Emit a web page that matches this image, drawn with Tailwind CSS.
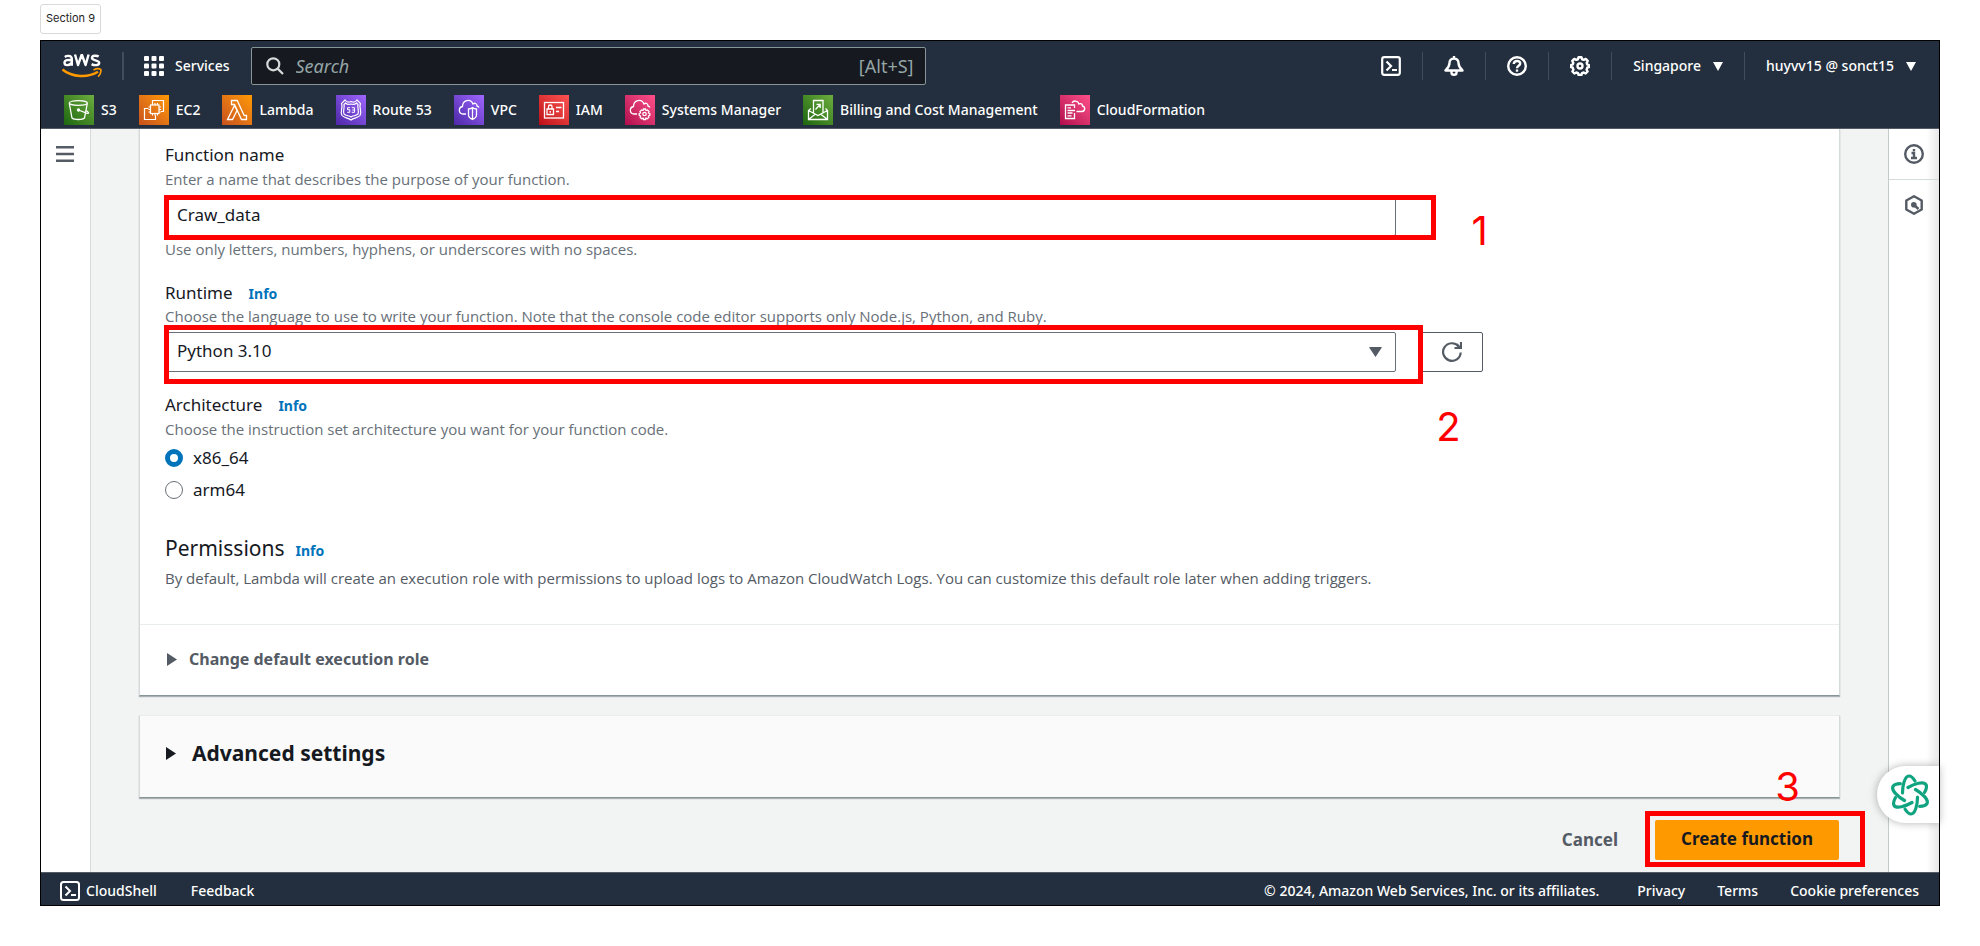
<!DOCTYPE html>
<html lang="en">
<head>
<meta charset="utf-8">
<title>Create function - Lambda</title>
<script src="https://cdn.jsdelivr.net/npm/@tailwindcss/browser@4"></script>
</head>
<body class="bg-white px-10 pt-1 font-['Noto_Sans','Open_Sans',sans-serif] text-[#16191f]">
<div class="mb-[6px] flex h-[30px] w-[61px] items-center justify-center rounded-[3px] border border-[#d9d9d9] pb-0.5 font-['Inter',sans-serif] text-[11px] whitespace-nowrap text-[#1e1e1e]">Section 9</div>

<div class="border border-black">
  <header class="border-b border-[#545b64] bg-[#232f3e] pt-[6px] text-sm font-medium text-white">
    <div class="flex h-[38px] items-center whitespace-nowrap pl-[21px] pr-[23px]">
      <a href="#" aria-label="AWS home" class="block">
        <svg class="h-6 w-10" viewBox="0 0 40 24" fill="none">
          <g stroke="#fff" stroke-width="2.400" stroke-linejoin="round">
            <path d="M2.800 3c1.200-.9 2.500-1.200 3.800-1.100 1.800.1 3.200 1 3.200 2.900v7M9.600 6.300C6.600 5.700 2.500 5.600 2.500 8.700c0 3.200 5 3.100 7.200.100"/>
            <path d="M13 .500l3 10.500 3.800-10.500 3.800 10.500L26.600.500"/>
            <path d="M36.700 2.600C34.800 1.300 30 1.200 30 4c0 3 7.200 1.600 7.200 4.800 0 3-5.300 2.700-7.600 1.300"/>
          </g>
          <path d="M.5 15.500C10 23.500 26 24 36 17.800" stroke="#f90" stroke-width="2.400"/>
          <path d="M31.500 16c2.500-1.300 5.900-1.300 7.200-.6.600 2.200-.8 5.400-2.600 7.300" stroke="#f90" stroke-width="1.700"/>
        </svg>
      </a>
      <span class="ml-5 h-7 w-0.5 bg-[#414d5c]"></span>
      <button class="ml-5 flex items-center gap-[11px]">
        <svg class="size-5" viewBox="0 0 20 20" fill="#fff"><g id="dots"><rect width="5" height="5" rx="1"/><rect x="7.500" width="5" height="5" rx="1"/><rect x="15" width="5" height="5" rx="1"/></g><use href="#dots" y="7.500"/><use href="#dots" y="15"/></svg>
        <span>Services</span>
      </button>
      <label class="ml-[21px] flex h-[38px] w-[675px] items-center rounded-[2px] border border-[#879596] bg-[#16191f] pl-[14px] pr-[11px] text-lg font-normal text-[#95a5a6]">
        <svg class="size-[18px] shrink-0" viewBox="0 0 18 18" fill="none" stroke="#d5dbdb" stroke-width="2.200"><circle cx="7.300" cy="7.300" r="6"/><path d="M11.600 11.600l5.400 5.400"/></svg>
        <input type="search" aria-label="Search" placeholder="Search" class="ml-3 min-w-0 flex-1 bg-transparent placeholder:text-[#95a5a6] placeholder:italic focus:outline-none">
        <span>[Alt+S]</span>
      </label>
      <nav class="ml-auto flex items-center gap-[21px]">
        <button aria-label="CloudShell"><svg class="block size-5" viewBox="0 0 20 20" fill="none" stroke="#fff" stroke-width="2.200"><rect x="1.200" y="1.200" width="17.600" height="17.600" rx="2"/><path d="M5.500 5.500L10 10l-4.500 4.500M11 14h5"/></svg></button>
        <span class="h-7 w-px bg-[#414d5c]"></span>
        <button aria-label="Notifications"><svg class="block size-5" viewBox="0 0 20 20" fill="none" stroke="#fff" stroke-width="2.400" stroke-linejoin="round"><path d="M10 0v2.500M10 2.500c-3 0-4.500 2.200-4.500 4.500 0 3.500-1.300 5-4 7.500h17c-2.700-2.500-4-4-4-7.500 0-2.300-1.500-4.500-4.500-4.500zM7.500 14.500v2.300a2.500 2 0 005 0v-2.300"/></svg></button>
        <span class="h-7 w-px bg-[#414d5c]"></span>
        <button aria-label="Help"><svg class="block size-5" viewBox="0 0 20 20" fill="none" stroke="#fff" stroke-width="2.400"><circle cx="10" cy="10" r="8.800"/><path d="M6.800 8c0-4 6.400-4 6.400-.5 0 2.300-3.200 2.200-3.200 4.700"/><path d="M10 13.500v2.200"/></svg></button>
        <span class="h-7 w-px bg-[#414d5c]"></span>
        <button aria-label="Settings"><svg class="block size-5" viewBox="0 0 20 20" fill="none" stroke="#fff" stroke-width="2.400" stroke-linejoin="round"><path d="M8.500 1.300h3l.6 2 1.600.6 2-1 2 2-1 2 .6 1.600 1.600.600v2l-1.600.6-.7 1.900 1 1.900-2 2-1.900-1-1.700.6-.5 1.700h-3l-.5-1.700-1.700-.6-1.900 1-2-2 1-1.900-.7-1.900-1.600-.6v-2l1.600-.6.600-1.600-1-2 2-2 2 1 1.600-.6z"/><circle cx="10" cy="10" r="2.500"/></svg></button>
        <span class="h-7 w-px bg-[#414d5c]"></span>
        <button class="flex items-center gap-3">Singapore<svg class="h-[9px] w-[10px]" viewBox="0 0 10 9" fill="#fff"><path d="M0 0h10L5 9z"/></svg></button>
        <span class="h-7 w-px bg-[#414d5c]"></span>
        <button class="flex items-center gap-3">huyvv15 @ sonct15<svg class="h-[9px] w-[10px]" viewBox="0 0 10 9" fill="#fff"><path d="M0 0h10L5 9z"/></svg></button>
      </nav>
    </div>
    <nav class="flex items-center gap-[22px] whitespace-nowrap pt-[10px] pb-[3px] pl-[23px]">
      <a href="#" class="flex items-center gap-[7px]"><span class="size-[30px] bg-linear-to-tr from-[#1b660f] to-[#6cae3e]"><svg viewBox="0 0 30 30" fill="none" stroke="#fff" stroke-width="1.300"><ellipse cx="14.300" cy="8" rx="9" ry="2.300"/><path d="M5.300 8.500L8 23c2 2 10.500 2 12.500 0l2.800-14.500M14.500 15l8 3.200c3 .8 2.300-1.200-.5-2.700"/><circle cx="14.500" cy="15" r="1" fill="#fff"/></svg></span>S3</a>
      <a href="#" class="flex items-center gap-[7px]"><span class="size-[30px] bg-linear-to-tr from-[#c8511b] to-[#f90]"><svg viewBox="0 0 30 30" fill="none" stroke="#fff" stroke-width="1.200"><rect x="11.500" y="10" width="8.500" height="8.500"/><path d="M13.500 8V10M16 8v2M18.500 8v2M13.500 18.500v2M16 18.500v2M18.500 18.500v2M9.500 12h2M9.500 14.500h2M9.500 17h2M20 12h2M20 14.500h2M20 17h2M13.500 8V5.500h11v11H22M9.500 13.500h-4v11h11v-4"/></svg></span>EC2</a>
      <a href="#" class="flex items-center gap-[7px]"><span class="size-[30px] bg-linear-to-tr from-[#c8511b] to-[#f90]"><svg viewBox="0 0 30 30" fill="none" stroke="#fff" stroke-width="1.300"><path d="M5.500 24.500h5l4.500-9-2.500-5zM9.500 5.500v4h3l7 15h5v-4h-2.300l-7-15z"/></svg></span>Lambda</a>
      <a href="#" class="flex items-center gap-[7px]"><span class="size-[30px] bg-linear-to-tr from-[#4d27a8] to-[#a166ff]"><svg viewBox="0 0 30 30" fill="none" stroke="#fff" stroke-width="1.200"><path d="M15 6.500c2 1 4.500.7 6-1.500l3.500 3.500c-2 4 2 7.500-.5 12-2 2.500-6 2-9 4.500-3-2.500-7-2-9-4.500-2.500-4.500 1.500-8-.5-12L9 5c1.500 2.200 4 2.500 6 1.500z"/><path d="M15 9c2 .7 4 .5 5.500-1l1.500 1.500c-1 3.500 1.500 7 0 9.500-2 2-5 1.500-7 3-2-1.500-5-1-7-3-1.500-2.500 1-6 0-9.500L9.500 8c1.500 1.500 3.500 1.700 5.500 1z"/><path stroke-width="1" d="M11.500 12.700v2h2.300v2.600h-2.600M14 12.700h-2.500M15.800 12.700h2.700v4.600h-2.700M16.300 15h2"/></svg></span>Route 53</a>
      <a href="#" class="flex items-center gap-[7px]"><span class="size-[30px] bg-linear-to-tr from-[#4d27a8] to-[#a166ff]"><svg viewBox="0 0 30 30" fill="none" stroke="#fff" stroke-width="1.300"><path d="M12 19H9c-4.500-.5-5-6.500-.5-7.500C8.500 5 16.500 3 19 9c2-1.500 4-.5 4 2 1.200.3 1.700.8 2 1.500"/><path d="M18.500 12.500c1.500 1.300 2.500 1.500 4 1.500v6c0 2-1.700 3.500-4 4.500-2.300-1-4-2.500-4-4.500v-6c1.500 0 2.500-.2 4-1.500zM18.500 12.500v12"/></svg></span>VPC</a>
      <a href="#" class="flex items-center gap-[7px]"><span class="size-[30px] bg-linear-to-tr from-[#bd0816] to-[#ff5252]"><svg viewBox="0 0 30 30" fill="none" stroke="#fff" stroke-width="1.300"><rect x="5.500" y="7.500" width="19" height="15.500"/><path d="M8 14h6.500v5.500H8zM9.500 14v-2.500c0-2 3.500-2 3.500 0V14M11.200 16v1.700M17 12.500h5.500M17 16.500h3"/></svg></span>IAM</a>
      <a href="#" class="flex items-center gap-[7px]"><span class="size-[30px] bg-linear-to-tr from-[#b0084d] to-[#ff4f8b]"><svg viewBox="0 0 30 30" fill="none" stroke="#fff" stroke-width="1.300"><path d="M12 19H9c-4.500-.5-5-6.500-.5-7.500C8.500 5 16.500 3 19 9c2-1.500 4-.5 4 2 1.200.3 1.700.8 2 1.500"/><circle cx="19.500" cy="19" r="1.700"/><path d="M18.500 14h2l.4 1.500 1.500-.5 1.600 1.500-.6 1.400 1.400.6v1.800l-1.400.7.400 1.400-1.400 1.300-1.500-.5-.4 1.300h-2l-.4-1.300-1.500.5-1.400-1.300.4-1.400-1.400-.7v-1.800l1.400-.6-.6-1.400 1.600-1.500 1.500.5z"/></svg></span>Systems Manager</a>
      <a href="#" class="flex items-center gap-[7px]"><span class="size-[30px] bg-linear-to-tr from-[#1b660f] to-[#6cae3e]"><svg viewBox="0 0 30 30" fill="none" stroke="#fff" stroke-width="1.300"><path d="M10.500 17.500v-12h9.500v12M8 13.500l-2.500 2V24.500h19v-9L22.500 13.500M5.500 15.500l9.500 5 9.500-5M5.500 24.500l7-5.500M24.500 24.500l-7-5.500M12.500 14.500l4.500-5M13.500 9.300h3.700v3.700"/></svg></span>Billing and Cost Management</a>
      <a href="#" class="flex items-center gap-[7px]"><span class="size-[30px] bg-linear-to-tr from-[#b0084d] to-[#ff4f8b]"><svg viewBox="0 0 30 30" fill="none" stroke="#fff" stroke-width="1.300"><path d="M14.500 13V10h-9v13.500h9V18M7.500 12.800h3.500M7.500 15.500h7.500M7.500 18h5M7.500 20.800h4M12 8c1.500-3 6-2.500 7 1 2-1 3.500 0 3.500 2 3 .8 3 5-.5 5.500h-5.500"/></svg></span>CloudFormation</a>
    </nav>
  </header>

  <div class="relative flex bg-[#f2f3f3]">
    <aside class="w-[50px] shrink-0 border-r border-[#d5dbdb] bg-white pt-[17px] pl-[15px]">
      <button aria-label="Open navigation" class="block"><svg class="block h-4 w-[18px]" viewBox="0 0 18 16" stroke="#545b64" stroke-width="2.400"><path d="M0 1.200h18M0 8h18M0 14.800h18"/></svg></button>
    </aside>

    <main class="min-w-0 flex-1 px-12 pb-3">
      <section class="border-x border-b border-x-[#d5dbdb] border-b-[#879596] bg-white shadow-[0_1px_1px_rgba(0,28,36,0.3)]">
        <div class="px-[25px] pt-[14px] pb-9">
          <label for="fname" class="block text-[17px] leading-6">Function name</label>
          <p class="mt-[2px] font-['Open_Sans',sans-serif] text-[15px] leading-5 text-[#687078]">Enter a name that describes the purpose of your function.</p>
          <div class="relative mt-[7px] w-3/4 pr-[6px]">
            <input id="fname" type="text" value="Craw_data" class="block h-10 w-full rounded-[2px] border border-[#687078] bg-white px-[11px] pb-[3px] text-[17px]">
            <div class="pointer-events-none absolute -top-px right-[-34px] -bottom-1 -left-px border-5 border-[#f00]"></div>
            <span class="absolute top-[11px] -right-[86px] font-['Inter',sans-serif] text-[40px] leading-[48px] text-[#f00]">1</span>
          </div>
          <p class="mt-[3px] font-['Open_Sans',sans-serif] text-[15px] leading-5 text-[#687078]">Use only letters, numbers, hyphens, or underscores with no spaces.</p>

          <div class="mt-[22px] flex h-6 items-baseline gap-4 text-[17px] leading-6"><label for="runtime">Runtime</label><a href="#" class="text-sm font-bold text-[#0073bb]">Info</a></div>
          <p class="mt-px font-['Open_Sans',sans-serif] text-[15px] leading-5 text-[#687078]">Choose the language to use to write your function. Note that the console code editor supports only Node.js, Python, and Ruby.</p>
          <div class="mt-[6px] flex">
            <div class="relative w-3/4 pr-[6px]">
              <select id="runtime" class="block h-10 w-full appearance-none rounded-[2px] border border-[#687078] bg-white px-[11px] pb-[3px] text-[17px]"><option>Python 3.10</option></select>
              <svg class="pointer-events-none absolute top-[15px] right-5 h-[10px] w-[13px]" viewBox="0 0 13 10" fill="#545b64"><path d="M.5 0h12q.5.500 0 1L6.500 10 .5 1q-.5-.5 0-1z"/></svg>
              <div class="pointer-events-none absolute -top-[7px] -right-[21px] -bottom-3 -left-px z-10 border-5 border-[#f00]"></div>
              <span class="absolute top-[71px] -right-[59px] font-['Inter',sans-serif] text-[40px] leading-[48px] text-[#f00]">2</span>
            </div>
            <button aria-label="Refresh runtimes" class="ml-4 flex h-10 w-[65px] items-center justify-center rounded-[2px] border border-[#545b64] bg-white"><svg class="ml-1 size-5" viewBox="0 0 20 20" fill="none" stroke="#545b64" stroke-width="2.200"><path d="M18.700 10.500A8.800 8.800 0 1 1 16.500 4.200M19 0v6h-6.500"/><path d="M14.500 2l4 4"/></svg></button>
          </div>

          <fieldset class="mt-[21px]">
            <legend class="flex h-6 items-baseline gap-4 text-[17px] leading-6">Architecture<a href="#" class="text-sm leading-5 font-bold text-[#0073bb]">Info</a></legend>
            <p class="mt-[2px] font-['Open_Sans',sans-serif] text-[15px] leading-5 text-[#687078]">Choose the instruction set architecture you want for your function code.</p>
            <label class="mt-[7px] flex items-center gap-[10px] text-[17px] leading-6"><input type="radio" name="arch" checked class="size-[18px] appearance-none rounded-full border border-[#687078] bg-white checked:border-[5px] checked:border-[#0073bb]">x86_64</label>
            <label class="mt-2 flex items-center gap-[10px] text-[17px] leading-6"><input type="radio" name="arch" class="size-[18px] appearance-none rounded-full border border-[#687078] bg-white checked:border-[5px] checked:border-[#0073bb]">arm64</label>
          </fieldset>

          <div class="mt-[30px] flex h-8 items-baseline gap-[11px]"><h2 class="text-[21px] leading-8">Permissions</h2><a href="#" class="text-sm font-bold text-[#0073bb]">Info</a></div>
          <p class="mt-1 font-['Open_Sans',sans-serif] text-[15px] leading-5 text-[#545b64]">By default, Lambda will create an execution role with permissions to upload logs to Amazon CloudWatch Logs. You can customize this default role later when adding triggers.</p>
        </div>
        <div class="border-t border-[#eaeded] px-[27px] pt-[22px] pb-6">
          <button class="flex items-center gap-3 text-base leading-6 font-bold text-[#545b64]"><svg class="h-[13px] w-[10px]" viewBox="0 0 10 13" fill="#545b64"><path d="M0 0l10 6.500L0 13z"/></svg>Change default execution role</button>
        </div>
      </section>

      <section class="mt-[19px] border border-x-[#d5dbdb] border-t-[#eaeded] border-b-[#879596] bg-[#fafafa] px-[26px] pt-[21px] pb-7 shadow-[0_1px_1px_rgba(0,28,36,0.3)]">
        <button class="flex items-center gap-4 text-[21px] leading-8 font-bold"><svg class="h-[13px] w-[10px]" viewBox="0 0 10 13" fill="#16191f"><path d="M0 0l10 6.500L0 13z"/></svg>Advanced settings</button>
      </section>

      <div class="mt-[22px] mr-px flex items-center justify-end gap-[37px] text-[17px] font-bold">
        <button class="text-[#545b64]">Cancel</button>
        <div class="relative">
          <button class="block h-10 w-[184px] rounded-[2px] bg-[#f90] pb-0.5 text-[#16191f]">Create function</button>
          <div class="pointer-events-none absolute -top-[9px] -right-[26px] -bottom-[7px] -left-[10px] border-5 border-[#f00]"></div>
          <span class="absolute -top-[57px] right-[39px] font-['Inter',sans-serif] text-[40px] leading-[48px] font-normal text-[#f00]">3</span>
        </div>
      </div>
    </main>

    <aside class="w-[51px] shrink-0 border-l border-[#c4cbcb] bg-linear-to-l from-[#e8e8ea] via-white via-25% to-white">
      <button aria-label="Info panel" class="flex h-[51px] w-full items-center justify-center border-b border-[#d5dbdb]"><svg class="size-5" viewBox="0 0 20 20" fill="none" stroke="#545b64" stroke-width="2.400"><circle cx="10" cy="10" r="8.800"/><path d="M7.500 9H10v5M7 14h6M10 5v2.200"/></svg></button>
      <button aria-label="Tutorials" class="flex h-[50px] w-full items-center justify-center"><svg class="size-5" viewBox="0 0 20 20" fill="none" stroke="#545b64" stroke-width="2.400" stroke-linejoin="round"><path d="M10 1.200l7.700 4.300v9L10 18.800l-7.700-4.300v-9z"/><circle cx="9.800" cy="9.800" r="2.800" fill="#545b64" stroke="none"/><path d="M10 10l4.500 4"/></svg></button>
    </aside>

    <button aria-label="Open assistant" class="absolute right-0 bottom-[49px] flex h-[57px] w-[62px] items-center rounded-l-full bg-white pl-[14px] shadow-[0_0_8px_rgba(0,0,0,0.3)]">
      <svg class="h-[42px] w-[38px]" viewBox="-19 -21 38 42" fill="none" stroke="#10a37f" stroke-width="3.200" stroke-linecap="round">
        <g id="petal"><path d="M-7.500-2C-7.500-9-5.500-19-1-19c3 0 4.500 2.500 6 5"/></g>
        <use href="#petal" transform="rotate(60)"/><use href="#petal" transform="rotate(120)"/><use href="#petal" transform="rotate(180)"/><use href="#petal" transform="rotate(240)"/><use href="#petal" transform="rotate(300)"/>
      </svg>
    </button>
  </div>

  <footer class="flex h-[33px] items-center whitespace-nowrap border-t border-[#545b64] bg-[#232f3e] pt-[3px] pr-5 pl-[19px] text-sm font-medium text-white">
    <a href="#" class="flex items-center gap-[6px]"><svg class="size-5" viewBox="0 0 20 20" fill="none" stroke="#fff" stroke-width="2"><rect x="1" y="1" width="18" height="18" rx="2.500"/><path d="M5.500 5.500L10 10l-4.500 4.500M11 14h5"/></svg>CloudShell</a>
    <a href="#" class="ml-[34px]">Feedback</a>
    <span class="ml-auto">© 2024, Amazon Web Services, Inc. or its affiliates.</span>
    <a href="#" class="ml-[38px]">Privacy</a>
    <a href="#" class="ml-8">Terms</a>
    <a href="#" class="ml-8">Cookie preferences</a>
  </footer>
</div>
</body>
</html>
